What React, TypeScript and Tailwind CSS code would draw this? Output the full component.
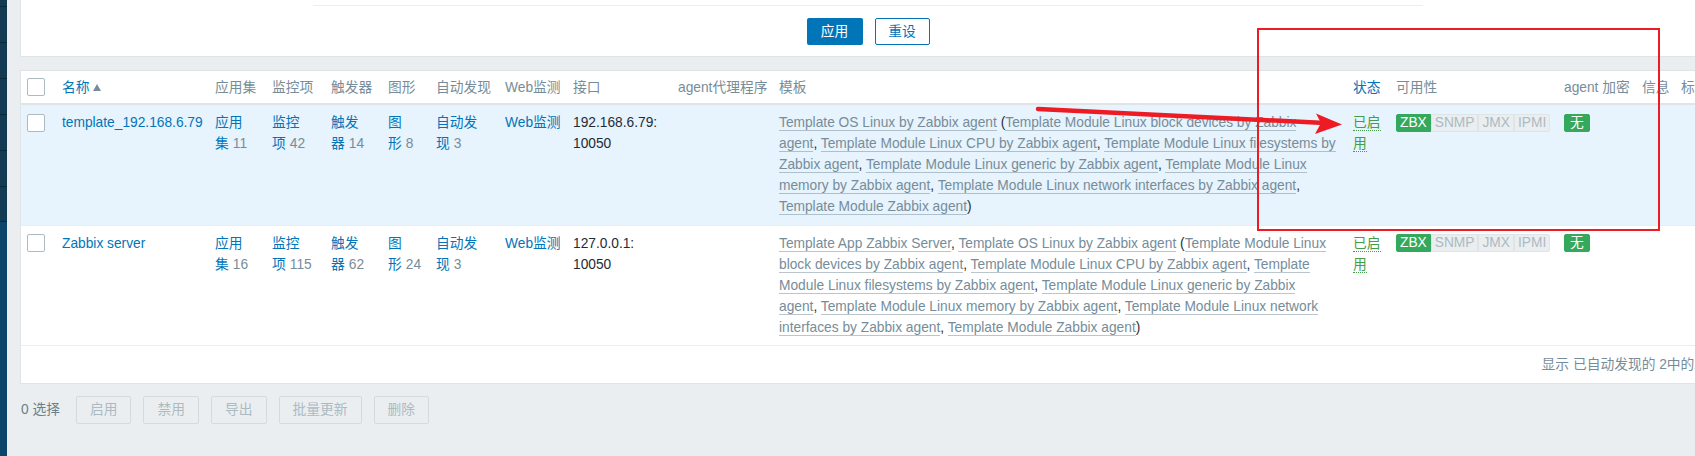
import { FC } from 'react';

type Seg = [string, boolean];

const LINK = 'text-[#0275b8]';
const MUTED = 'text-[#768d99]';
const CELL = 'align-top px-[5px] pt-[7px] pb-[7.5px] border-b border-[#ebeef0]';

const columns: { label: string; w: string; sort?: boolean; active?: boolean }[] = [
  { label: '', w: 'w-[36px]' },
  { label: '名称', w: 'w-[153px]', sort: true, active: true },
  { label: '应用集', w: 'w-[57px]' },
  { label: '监控项', w: 'w-[59px]' },
  { label: '触发器', w: 'w-[57px]' },
  { label: '图形', w: 'w-[48px]' },
  { label: '自动发现', w: 'w-[69px]' },
  { label: 'Web监测', w: 'w-[68px]' },
  { label: '接口', w: 'w-[105px]' },
  { label: 'agent代理程序', w: 'w-[101px]' },
  { label: '模板', w: 'w-[574px]' },
  { label: '状态', w: 'w-[43px]', active: true },
  { label: '可用性', w: 'w-[168px]' },
  { label: 'agent 加密', w: 'w-[78px]' },
  { label: '信息', w: 'w-[39px]' },
  { label: '标记', w: 'w-[31px]' },
];

const hosts: {
  name: string;
  counts: [string, string, string][];
  ip: string;
  templates: Seg[][];
  selected?: boolean;
}[] = [
  {
    name: 'template_192.168.6.79',
    selected: true,
    counts: [
      ['应用', '集', '11'],
      ['监控', '项', '42'],
      ['触发', '器', '14'],
      ['图', '形', '8'],
      ['自动发', '现', '3'],
    ],
    ip: '192.168.6.79:',
    templates: [
      [['Template OS Linux by Zabbix agent', true], [' (', false], ['Template Module Linux block devices by Zabbix', true]],
      [['agent', true], [', ', false], ['Template Module Linux CPU by Zabbix agent', true], [', ', false], ['Template Module Linux filesystems by', true]],
      [['Zabbix agent', true], [', ', false], ['Template Module Linux generic by Zabbix agent', true], [', ', false], ['Template Module Linux', true]],
      [['memory by Zabbix agent', true], [', ', false], ['Template Module Linux network interfaces by Zabbix agent', true], [',', false]],
      [['Template Module Zabbix agent', true], [')', false]],
    ],
  },
  {
    name: 'Zabbix server',
    counts: [
      ['应用', '集', '16'],
      ['监控', '项', '115'],
      ['触发', '器', '62'],
      ['图', '形', '24'],
      ['自动发', '现', '3'],
    ],
    ip: '127.0.0.1:',
    templates: [
      [['Template App Zabbix Server', true], [', ', false], ['Template OS Linux by Zabbix agent', true], [' (', false], ['Template Module Linux', true]],
      [['block devices by Zabbix agent', true], [', ', false], ['Template Module Linux CPU by Zabbix agent', true], [', ', false], ['Template', true]],
      [['Module Linux filesystems by Zabbix agent', true], [', ', false], ['Template Module Linux generic by Zabbix', true]],
      [['agent', true], [', ', false], ['Template Module Linux memory by Zabbix agent', true], [', ', false], ['Template Module Linux network', true]],
      [['interfaces by Zabbix agent', true], [', ', false], ['Template Module Zabbix agent', true], [')', false]],
    ],
  },
];

const Checkbox: FC = () => (
  <span className="block w-[18px] h-[18px] bg-white border border-[#acbbc2] rounded-[2px]" />
);

const Sidebar: FC = () => (
  <div className="w-[7px] shrink-0 flex flex-col">
    {[7, 36, 36, 36, 36, 36, 35].map((h, i) => (
      <div key={i} className={`bg-[#123a55] border-b border-[#0a2739] ${h === 7 ? 'h-[7px]' : h === 36 ? 'h-[36px]' : 'h-[35px]'}`} />
    ))}
    <div className="flex-1 bg-[#0c4569]" />
  </div>
);

const Badge: FC<{ label: string; on?: boolean; first?: boolean; last?: boolean }> = ({ label, on, first, last }) => (
  <span
    className={`inline-block h-[18px] leading-[16px] px-[3px] border ${
      on ? 'bg-[#34a95d] border-[#34a95d] text-white' : 'bg-[#ebeef0] border-[#dfe4e7] text-[#acbbc2]'
    } ${first ? 'rounded-l-[2px]' : ''} ${last ? 'rounded-r-[2px]' : ''}`}
  >
    {label}
  </span>
);

const FilterPanel: FC = () => (
  <div className="w-[1688px] h-[57px] bg-white border-x border-b border-[#dfe4e7]">
    <div className="ml-[292px] w-[1110px]">
      <div className="h-[6px] border-b border-[#ebeef0]" />
      <div className="flex justify-center gap-[12px] mt-[12px]">
        <button className="h-[27px] w-[56px] rounded-[2px] bg-[#0275b8] text-white">应用</button>
        <button className="h-[27px] w-[55px] rounded-[2px] bg-white border border-[#0275b8] text-[#0275b8]">重设</button>
      </div>
    </div>
  </div>
);

const HostTable: FC = () => (
  <div className="w-[1688px] mt-[13px] bg-white border border-[#dfe4e7]">
    <table className="table-fixed border-collapse w-[1686px]">
      <colgroup>
        {columns.map((c, i) => (
          <col key={i} className={c.w} />
        ))}
      </colgroup>
      <thead>
        <tr>
          {columns.map((c, i) => (
            <th
              key={i}
              className={`h-[33px] border-b-2 border-[#dfe4e7] text-left font-normal align-middle whitespace-nowrap overflow-hidden ${
                i === 0 ? 'pl-[6px]' : 'px-[5px]'
              } ${c.active ? LINK : MUTED}`}
            >
              {i === 0 ? (
                <Checkbox />
              ) : (
                <span className="inline-flex items-center">
                  {c.label}
                  {c.sort && (
                    <span className="ml-[3px] w-0 h-0 border-x-[4.5px] border-x-transparent border-b-[7px] border-b-[#768d99]" />
                  )}
                </span>
              )}
            </th>
          ))}
        </tr>
      </thead>
      <tbody>
        {hosts.map((h) => (
          <tr key={h.name} className={h.selected ? 'bg-[#e7f3fd]' : ''}>
            <td className={`${CELL} pl-[6px]`}>
              <div className="h-[21px] flex items-center">
                <Checkbox />
              </div>
            </td>
            <td className={`${CELL} whitespace-nowrap ${LINK}`}>{h.name}</td>
            {h.counts.map(([a, b, n], i) => (
              <td key={i} className={`${CELL} whitespace-nowrap`}>
                <div className={LINK}>{a}</div>
                <div>
                  <span className={LINK}>{b}</span>
                  <span className={`ml-[4px] ${MUTED}`}>{n}</span>
                </div>
              </td>
            ))}
            <td className={`${CELL} whitespace-nowrap ${LINK}`}>Web监测</td>
            <td className={`${CELL} whitespace-nowrap`}>
              <div>{h.ip}</div>
              <div>10050</div>
            </td>
            <td className={CELL} />
            <td className={CELL}>
              {h.templates.map((line, i) => (
                <div key={i} className="whitespace-nowrap">
                  {line.map(([text, link], j) =>
                    link ? (
                      <span key={j} className="text-[#768d99] border-b border-[#768d99]/50">
                        {text}
                      </span>
                    ) : (
                      <span key={j}>{text}</span>
                    ),
                  )}
                </div>
              ))}
            </td>
            <td className={CELL}>
              <span className="text-[#429e47] border-b border-dotted border-[#429e47]">已启用</span>
            </td>
            <td className={`${CELL} px-[4px] whitespace-nowrap`}>
              <div className="h-[21px] flex items-center">
                <Badge label="ZBX" on first />
                <Badge label="SNMP" />
                <Badge label="JMX" />
                <Badge label="IPMI" last />
              </div>
            </td>
            <td className={`${CELL} px-[4px]`}>
              <div className="h-[21px] flex items-center">
                <span className="inline-block h-[18px] leading-[16px] px-[5px] border border-[#34a95d] bg-[#34a95d] text-white rounded-[2px]">
                  无
                </span>
              </div>
            </td>
            <td className={CELL} />
            <td className={CELL} />
          </tr>
        ))}
        <tr>
          <td colSpan={columns.length} className={`h-[37px] px-[5px] text-right align-middle whitespace-nowrap ${MUTED}`}>
            显示 已自动发现的 2中的2
          </td>
        </tr>
      </tbody>
    </table>
  </div>
);

const ActionBar: FC = () => (
  <div className="flex items-center gap-[12px] mt-[12px] pl-[1px]">
    <span className="mr-[4px] text-[#6b7f8b]">0 选择</span>
    {['启用', '禁用', '导出', '批量更新', '删除'].map((b) => (
      <button
        key={b}
        className="h-[28px] px-[13px] rounded-[2px] border border-[#d4dbe0] bg-[#ebeef0] text-[#acbbc2]"
      >
        {b}
      </button>
    ))}
  </div>
);

const Annotations: FC = () => (
  <div className="absolute inset-0 pointer-events-none">
    <div className="absolute left-[1257px] top-[28px] w-[403px] h-[203px] border-2 border-[#ed1c24]" />
    <svg className="absolute inset-0" width="1695" height="456" viewBox="0 0 1695 456">
      <line x1="1038" y1="109" x2="1320" y2="122.8" stroke="#ed1c24" strokeWidth="4.5" strokeLinecap="round" />
      <polygon points="1316,113.5 1342,124.5 1315,134 1321,123" fill="#ed1c24" />
    </svg>
  </div>
);

const App: FC = () => {
  return (
    <div className="relative w-[1695px] h-[456px] overflow-hidden flex bg-[#ebeef0] text-[#1f2c33] text-[13.75px] leading-[21px] font-['Liberation_Sans','Noto_Sans_CJK_SC',sans-serif]">
      <Sidebar />
      <div className="flex-1 pl-[13px] flex flex-col">
        <FilterPanel />
        <HostTable />
        <ActionBar />
      </div>
      <Annotations />
    </div>
  );
};

export default App;
